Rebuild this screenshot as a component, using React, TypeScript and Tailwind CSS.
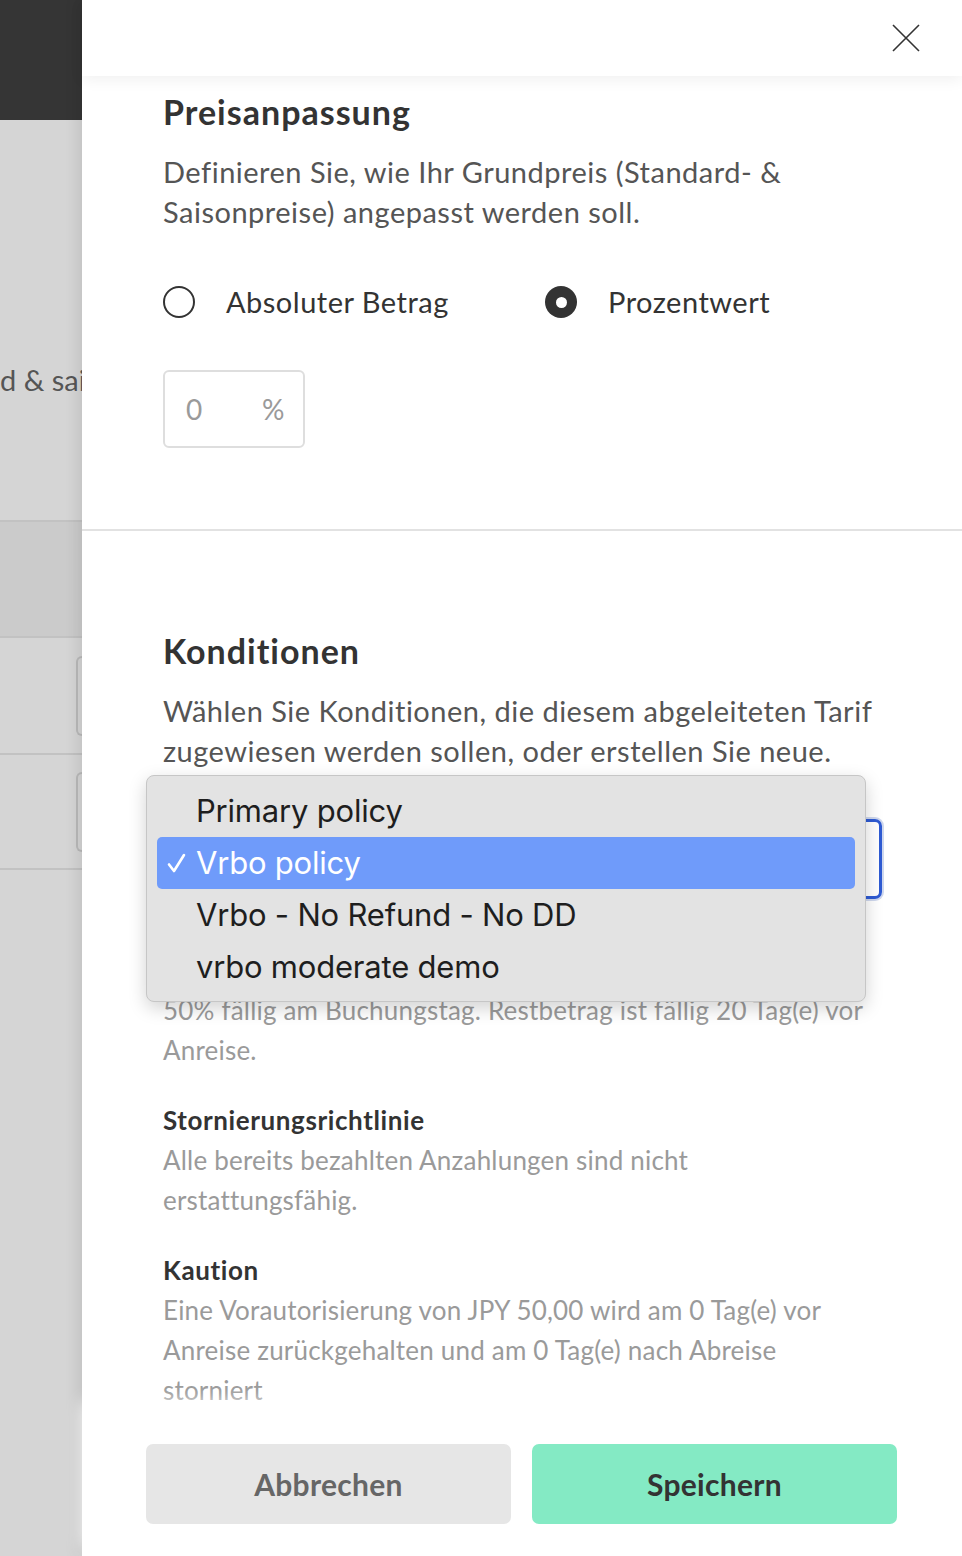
import React from "react";

const policies = [
  "Primary policy",
  "Vrbo policy",
  "Vrbo - No Refund - No DD",
  "vrbo moderate demo",
];

function CloseIcon() {
  return (
    <svg width="30" height="30" viewBox="0 0 30 30" fill="none">
      <path d="M2 2 L28 28 M28 2 L2 28" stroke="#333" strokeWidth="1.6" />
    </svg>
  );
}

function CheckMark() {
  return (
    <svg width="20" height="20" viewBox="0 0 20 20" fill="none">
      <path d="M2 11.5 L7 18 L17 2" stroke="white" strokeWidth="2.6" strokeLinecap="round" strokeLinejoin="round" />
    </svg>
  );
}

function Radio({ checked, label }: { checked: boolean; label: string }) {
  return (
    <div className="flex items-center gap-[31px] h-[40px]">
      {checked ? (
        <span className="w-[32px] h-[32px] rounded-full bg-[#333] flex items-center justify-center">
          <span className="w-[11px] h-[11px] rounded-full bg-white" />
        </span>
      ) : (
        <span className="w-[32px] h-[32px] rounded-full border-2 border-[#333]" />
      )}
      <span className="text-[29px] tracking-[0.5px] text-[#333]">{label}</span>
    </div>
  );
}

function PolicyDropdown() {
  return (
    <div className="absolute left-[-17px] top-[-44px] z-20 w-[720px] h-[227px] rounded-[8px] border border-[#c6c6c6] bg-[#e3e3e3] shadow-[0_6px_18px_rgba(0,0,0,0.18)] px-[10px] pt-[9px] font-['Inter',sans-serif]">
      {policies.map((p) => {
        const active = p === "Vrbo policy";
        return (
          <div
            key={p}
            className={
              active
                ? "h-[52px] flex items-center rounded-[5px] bg-[#6f9bfa] text-white"
                : "h-[52px] flex items-center text-[#1e1e1e]"
            }
          >
            <span className="w-[39px] pl-[10px] flex items-center">{active && <CheckMark />}</span>
            <span className="text-[31px] tracking-[-0.2px]">{p}</span>
          </div>
        );
      })}
    </div>
  );
}

function LeftBackdrop() {
  return (
    <div className="w-[82px] shrink-0 flex flex-col bg-[#d5d5d5] overflow-hidden">
      <div className="h-[120px] bg-[#353535]" />
      <div className="h-[400px] flex items-center">
        <span className="block w-[82px] overflow-hidden whitespace-nowrap text-[29px] text-[#555] mt-[120px]">
          d &amp; sai
        </span>
      </div>
      <div className="h-[116px] border-t-2 border-[#c2c2c2] bg-[#cbcbcb]" />
      <div className="h-[117px] border-t-2 border-[#c2c2c2] flex items-center justify-end">
        <div className="w-[6px] h-[80px] rounded-l-[6px] border-2 border-r-0 border-[#b9b9b9]" />
      </div>
      <div className="h-[115px] border-t-2 border-[#c2c2c2] flex items-center justify-end">
        <div className="w-[6px] h-[80px] rounded-l-[6px] border-2 border-r-0 border-[#b9b9b9]" />
      </div>
      <div className="flex-1 border-t-2 border-[#c2c2c2]" />
    </div>
  );
}

function PolicyBlock({ title, lines }: { title: string; lines: string }) {
  return (
    <div className="mt-[30px]">
      <div className="text-[26px] leading-[40px] tracking-[0.6px] font-bold text-[#333]">{title}</div>
      <div className="text-[26px] leading-[40px] tracking-[0.2px] text-[#9a9a9a]">{lines}</div>
    </div>
  );
}

export default function App() {
  return (
    <div className="w-[962px] h-[1556px] flex overflow-hidden font-['Lato',sans-serif]">
      <LeftBackdrop />
      <div className="flex-1 flex flex-col bg-white shadow-[-6px_0_12px_rgba(0,0,0,0.08)] min-w-0">
        <div className="h-[76px] shrink-0 flex items-center justify-end pr-[41px] relative z-10 bg-white shadow-[0_4px_14px_rgba(0,0,0,0.06)]">
          <CloseIcon />
        </div>

        <div className="flex-1 min-h-0 overflow-hidden">
          <div className="pl-[81px] pr-[80px] pt-[16px] pb-[81px]">
            <h2 className="text-[34px] leading-[40px] tracking-[1px] font-bold text-[#333]">Preisanpassung</h2>
            <p className="mt-[20px] text-[29px] leading-[40px] tracking-[0.5px] text-[#555]">
              Definieren Sie, wie Ihr Grundpreis (Standard- &amp; Saisonpreise) angepasst werden soll.
            </p>
            <div className="mt-[50px] flex items-center">
              <div className="w-[382px]">
                <Radio checked={false} label="Absoluter Betrag" />
              </div>
              <Radio checked={true} label="Prozentwert" />
            </div>
            <div className="mt-[48px] w-[142px] h-[78px] rounded-[6px] border-2 border-[#dedede] flex items-center justify-between pl-[21px] pr-[18px] text-[28px] tracking-[0.5px] text-[#9a9a9a]">
              <span>0</span>
              <span>%</span>
            </div>
          </div>

          <div className="border-t-2 border-[#e2e2e2] pl-[81px] pr-[80px] pt-[100px]">
            <h2 className="text-[34px] leading-[40px] tracking-[1px] font-bold text-[#333]">Konditionen</h2>
            <p className="mt-[20px] text-[29px] leading-[40px] tracking-[0.5px] text-[#555]">
              Wählen Sie Konditionen, die diesem abgeleiteten Tarif zugewiesen werden sollen, oder erstellen Sie neue.
            </p>
            <div className="relative mt-[48px]">
              <div className="h-[80px] rounded-[7px] border-[3px] border-[#2f5bd3] ring-[2px] ring-[#cfd8ee]" />
              <PolicyDropdown />
            </div>
            <div className="mt-[91px] text-[26px] leading-[40px] tracking-[0.2px] text-[#9a9a9a]">
              50% fällig am Buchungstag. Restbetrag ist fällig 20 Tag(e) vor Anreise.
            </div>
            <PolicyBlock
              title="Stornierungsrichtlinie"
              lines="Alle bereits bezahlten Anzahlungen sind nicht erstattungsfähig."
            />
            <PolicyBlock
              title="Kaution"
              lines="Eine Vorautorisierung von JPY 50,00 wird am 0 Tag(e) vor Anreise zurückgehalten und am 0 Tag(e) nach Abreise storniert"
            />
          </div>
        </div>

        <div className="shrink-0 relative z-10 bg-white shadow-[0_-8px_16px_rgba(255,255,255,0.9)] pl-[64px] pr-[65px] pt-[34px] pb-[32px] flex gap-[21px]">
          <button className="flex-1 h-[80px] rounded-[7px] bg-[#e6e6e6] text-[30px] tracking-[0.3px] font-bold text-[#666]">
            Abbrechen
          </button>
          <button className="flex-1 h-[80px] rounded-[7px] bg-[#84eac4] text-[30px] tracking-[0.3px] font-bold text-[#333]">
            Speichern
          </button>
        </div>
      </div>
    </div>
  );
}
